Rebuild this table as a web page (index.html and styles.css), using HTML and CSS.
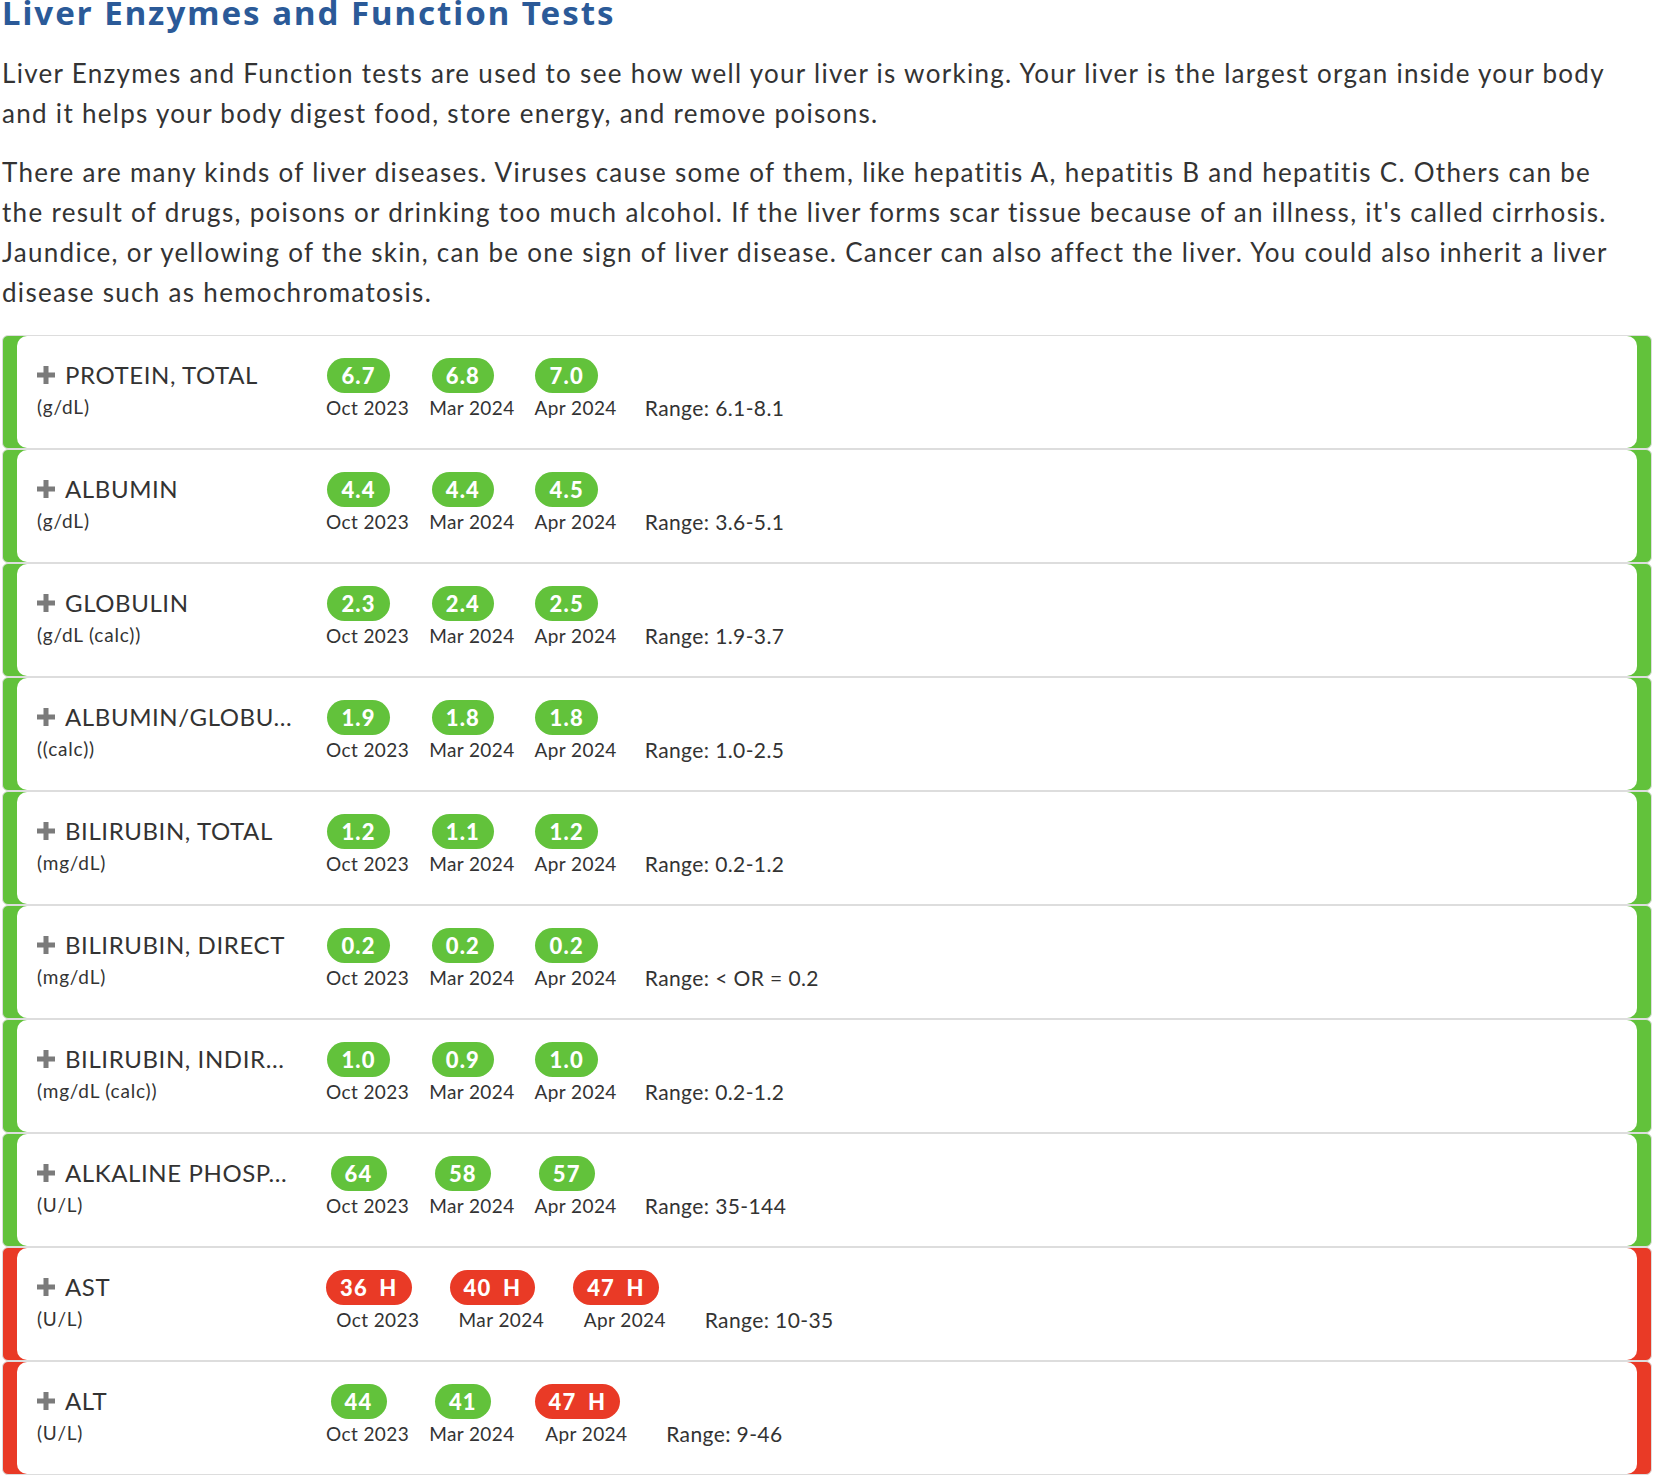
FILE: index.html
```html
<!DOCTYPE html>
<html lang="en">
<head>
    <meta charset="UTF-8">
    <meta name="viewport" content="width=device-width, initial-scale=1.0">
    <title>Liver Enzymes and Function Tests</title>
    <link rel="stylesheet" href="styles.css">
</head>
<body>
<div class="page">

    <h1>Liver Enzymes and Function Tests</h1>

    <p>Liver Enzymes and Function tests are used to see how well your liver is working. Your liver is the largest organ inside your body and it helps your body digest food, store energy, and remove poisons.</p>

    <p>There are many kinds of liver diseases. Viruses cause some of them, like hepatitis A, hepatitis B and hepatitis C. Others can be the result of drugs, poisons or drinking too much alcohol. If the liver forms scar tissue because of an illness, it's called cirrhosis. Jaundice, or yellowing of the skin, can be one sign of liver disease. Cancer can also affect the liver. You could also inherit a liver disease such as hemochromatosis.</p>

    <div class="results">

        <!-- Protein -->
        <div class="result normal">
            <div class="result-body">
                <div class="test">
                    <div class="test-name">
                        <svg class="plus" viewBox="0 0 18 18" width="18" height="18"><rect x="0" y="6.5" width="18" height="5" fill="#7b7b7b"/><rect x="6.5" y="0" width="5" height="18" fill="#7b7b7b"/></svg>
                        <span class="name">PROTEIN, TOTAL</span>
                    </div>
                    <div class="unit">(g/dL)</div>
                </div>
                <div class="values">
                    <div class="value"><span class="badge">6.7</span><span class="date">Oct 2023</span></div>
                    <div class="value"><span class="badge">6.8</span><span class="date">Mar 2024</span></div>
                    <div class="value"><span class="badge">7.0</span><span class="date">Apr 2024</span></div>
                    <div class="range">Range: 6.1-8.1</div>
                </div>
            </div>
        </div>

        <!-- Albumin -->
        <div class="result normal">
            <div class="result-body">
                <div class="test">
                    <div class="test-name">
                        <svg class="plus" viewBox="0 0 18 18" width="18" height="18"><rect x="0" y="6.5" width="18" height="5" fill="#7b7b7b"/><rect x="6.5" y="0" width="5" height="18" fill="#7b7b7b"/></svg>
                        <span class="name">ALBUMIN</span>
                    </div>
                    <div class="unit">(g/dL)</div>
                </div>
                <div class="values">
                    <div class="value"><span class="badge">4.4</span><span class="date">Oct 2023</span></div>
                    <div class="value"><span class="badge">4.4</span><span class="date">Mar 2024</span></div>
                    <div class="value"><span class="badge">4.5</span><span class="date">Apr 2024</span></div>
                    <div class="range">Range: 3.6-5.1</div>
                </div>
            </div>
        </div>

        <!-- Globulin -->
        <div class="result normal">
            <div class="result-body">
                <div class="test">
                    <div class="test-name">
                        <svg class="plus" viewBox="0 0 18 18" width="18" height="18"><rect x="0" y="6.5" width="18" height="5" fill="#7b7b7b"/><rect x="6.5" y="0" width="5" height="18" fill="#7b7b7b"/></svg>
                        <span class="name">GLOBULIN</span>
                    </div>
                    <div class="unit">(g/dL (calc))</div>
                </div>
                <div class="values">
                    <div class="value"><span class="badge">2.3</span><span class="date">Oct 2023</span></div>
                    <div class="value"><span class="badge">2.4</span><span class="date">Mar 2024</span></div>
                    <div class="value"><span class="badge">2.5</span><span class="date">Apr 2024</span></div>
                    <div class="range">Range: 1.9-3.7</div>
                </div>
            </div>
        </div>

        <!-- A/G ratio -->
        <div class="result normal">
            <div class="result-body">
                <div class="test">
                    <div class="test-name">
                        <svg class="plus" viewBox="0 0 18 18" width="18" height="18"><rect x="0" y="6.5" width="18" height="5" fill="#7b7b7b"/><rect x="6.5" y="0" width="5" height="18" fill="#7b7b7b"/></svg>
                        <span class="name">ALBUMIN/GLOBU...</span>
                    </div>
                    <div class="unit">((calc))</div>
                </div>
                <div class="values">
                    <div class="value"><span class="badge">1.9</span><span class="date">Oct 2023</span></div>
                    <div class="value"><span class="badge">1.8</span><span class="date">Mar 2024</span></div>
                    <div class="value"><span class="badge">1.8</span><span class="date">Apr 2024</span></div>
                    <div class="range">Range: 1.0-2.5</div>
                </div>
            </div>
        </div>

        <!-- Bilirubin total -->
        <div class="result normal">
            <div class="result-body">
                <div class="test">
                    <div class="test-name">
                        <svg class="plus" viewBox="0 0 18 18" width="18" height="18"><rect x="0" y="6.5" width="18" height="5" fill="#7b7b7b"/><rect x="6.5" y="0" width="5" height="18" fill="#7b7b7b"/></svg>
                        <span class="name">BILIRUBIN, TOTAL</span>
                    </div>
                    <div class="unit">(mg/dL)</div>
                </div>
                <div class="values">
                    <div class="value"><span class="badge">1.2</span><span class="date">Oct 2023</span></div>
                    <div class="value"><span class="badge">1.1</span><span class="date">Mar 2024</span></div>
                    <div class="value"><span class="badge">1.2</span><span class="date">Apr 2024</span></div>
                    <div class="range">Range: 0.2-1.2</div>
                </div>
            </div>
        </div>

        <!-- Bilirubin direct -->
        <div class="result normal">
            <div class="result-body">
                <div class="test">
                    <div class="test-name">
                        <svg class="plus" viewBox="0 0 18 18" width="18" height="18"><rect x="0" y="6.5" width="18" height="5" fill="#7b7b7b"/><rect x="6.5" y="0" width="5" height="18" fill="#7b7b7b"/></svg>
                        <span class="name">BILIRUBIN, DIRECT</span>
                    </div>
                    <div class="unit">(mg/dL)</div>
                </div>
                <div class="values">
                    <div class="value"><span class="badge">0.2</span><span class="date">Oct 2023</span></div>
                    <div class="value"><span class="badge">0.2</span><span class="date">Mar 2024</span></div>
                    <div class="value"><span class="badge">0.2</span><span class="date">Apr 2024</span></div>
                    <div class="range">Range: &lt; OR = 0.2</div>
                </div>
            </div>
        </div>

        <!-- Bilirubin indirect -->
        <div class="result normal">
            <div class="result-body">
                <div class="test">
                    <div class="test-name">
                        <svg class="plus" viewBox="0 0 18 18" width="18" height="18"><rect x="0" y="6.5" width="18" height="5" fill="#7b7b7b"/><rect x="6.5" y="0" width="5" height="18" fill="#7b7b7b"/></svg>
                        <span class="name">BILIRUBIN, INDIR...</span>
                    </div>
                    <div class="unit">(mg/dL (calc))</div>
                </div>
                <div class="values">
                    <div class="value"><span class="badge">1.0</span><span class="date">Oct 2023</span></div>
                    <div class="value"><span class="badge">0.9</span><span class="date">Mar 2024</span></div>
                    <div class="value"><span class="badge">1.0</span><span class="date">Apr 2024</span></div>
                    <div class="range">Range: 0.2-1.2</div>
                </div>
            </div>
        </div>

        <!-- Alk phos -->
        <div class="result normal">
            <div class="result-body">
                <div class="test">
                    <div class="test-name">
                        <svg class="plus" viewBox="0 0 18 18" width="18" height="18"><rect x="0" y="6.5" width="18" height="5" fill="#7b7b7b"/><rect x="6.5" y="0" width="5" height="18" fill="#7b7b7b"/></svg>
                        <span class="name">ALKALINE PHOSP...</span>
                    </div>
                    <div class="unit">(U/L)</div>
                </div>
                <div class="values">
                    <div class="value"><span class="badge">64</span><span class="date">Oct 2023</span></div>
                    <div class="value"><span class="badge">58</span><span class="date">Mar 2024</span></div>
                    <div class="value"><span class="badge">57</span><span class="date">Apr 2024</span></div>
                    <div class="range">Range: 35-144</div>
                </div>
            </div>
        </div>

        <!-- AST -->
        <div class="result high">
            <div class="result-body">
                <div class="test">
                    <div class="test-name">
                        <svg class="plus" viewBox="0 0 18 18" width="18" height="18"><rect x="0" y="6.5" width="18" height="5" fill="#7b7b7b"/><rect x="6.5" y="0" width="5" height="18" fill="#7b7b7b"/></svg>
                        <span class="name">AST</span>
                    </div>
                    <div class="unit">(U/L)</div>
                </div>
                <div class="values">
                    <div class="value"><span class="badge high">36 H</span><span class="date">Oct 2023</span></div>
                    <div class="value"><span class="badge high">40 H</span><span class="date">Mar 2024</span></div>
                    <div class="value"><span class="badge high">47 H</span><span class="date">Apr 2024</span></div>
                    <div class="range">Range: 10-35</div>
                </div>
            </div>
        </div>

        <!-- ALT -->
        <div class="result high">
            <div class="result-body">
                <div class="test">
                    <div class="test-name">
                        <svg class="plus" viewBox="0 0 18 18" width="18" height="18"><rect x="0" y="6.5" width="18" height="5" fill="#7b7b7b"/><rect x="6.5" y="0" width="5" height="18" fill="#7b7b7b"/></svg>
                        <span class="name">ALT</span>
                    </div>
                    <div class="unit">(U/L)</div>
                </div>
                <div class="values">
                    <div class="value"><span class="badge">44</span><span class="date">Oct 2023</span></div>
                    <div class="value"><span class="badge">41</span><span class="date">Mar 2024</span></div>
                    <div class="value"><span class="badge high">47 H</span><span class="date">Apr 2024</span></div>
                    <div class="range">Range: 9-46</div>
                </div>
            </div>
        </div>

    </div>
</div>
</body>
</html>
```

FILE: styles.css
```css
body {
    margin: 0;
    font-family: Lato, "Liberation Sans", sans-serif;
    color: #333333;
    background-color: #ffffff;
}
.page {
    width: 1650px;
    padding-left: 2px;
}
h1 {
    margin: -4px 0 0 0;
    font-family: "Noto Sans", sans-serif;
    font-size: 33px;
    line-height: 34px;
    font-weight: 700;
    letter-spacing: 2px;
    color: #2b5a98;
}
p {
    width: 1625px;
    margin: 19px 0 0 0;
    font-size: 26px;
    line-height: 40px;
    letter-spacing: 1.3px;
}
h1 + p {
    margin-top: 23px;
}
.results {
    margin-top: 23px;
}
.result {
    display: flex;
    height: 112px;
    padding: 0 14px;
    border: 1px solid #dddddd;
    border-radius: 6px;
    background-color: #62c23b;
}
.result.high {
    background-color: #e93a26;
}
.result-body {
    flex: 1;
    display: flex;
    align-items: flex-start;
    padding: 22px 0 0 20px;
    background-color: #ffffff;
    border-radius: 10px;
}
.test {
    width: 289px;
    flex-shrink: 0;
    padding-top: 3px;
}
.test-name {
    display: flex;
    align-items: center;
    gap: 10px;
    font-size: 24px;
    line-height: 28px;
    letter-spacing: 0.6px;
    color: #333333;
}
.plus {
    flex-shrink: 0;
}
.name {
    white-space: nowrap;
}
.unit {
    margin-top: 6px;
    font-size: 19px;
    line-height: 24px;
    letter-spacing: 0.8px;
}
.values {
    display: flex;
    align-items: flex-end;
    gap: 20px;
}
.value {
    display: flex;
    flex-direction: column;
    align-items: center;
}
.badge {
    height: 35px;
    padding: 0 14px;
    margin-right: 18px;
    border-radius: 18px;
    background-color: #62c23b;
    color: #ffffff;
    font-size: 22px;
    font-weight: 900;
    line-height: 35px;
    letter-spacing: 1.2px;
    word-spacing: 5px;
    white-space: nowrap;
}
.badge.high {
    background-color: #e93a26;
}
.date {
    margin-top: 3px;
    font-size: 19px;
    line-height: 24px;
    letter-spacing: 0.4px;
    white-space: nowrap;
}
.range {
    margin-left: 8px;
    font-size: 21px;
    line-height: 24px;
    letter-spacing: 0.4px;
    white-space: nowrap;
}
```
